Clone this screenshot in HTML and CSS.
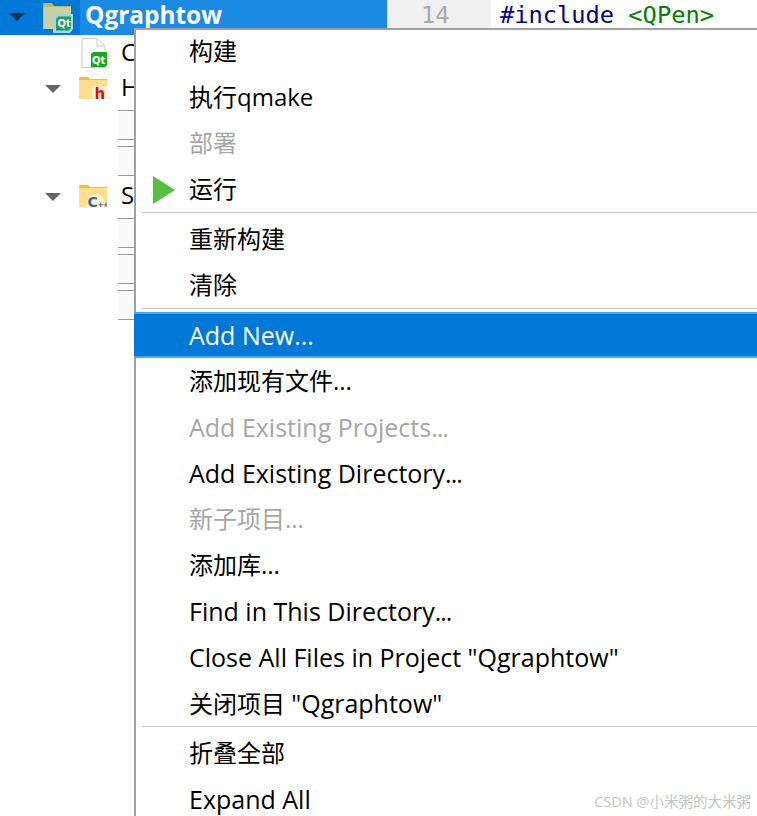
FILE: index.html
```html
<!DOCTYPE html>
<html lang="zh">
<head>
<meta charset="utf-8">
<title>Qt Creator context menu</title>
<link rel="stylesheet" href="styles.css">
</head>
<body>
<div class="app">
  <div class="topbar">
    <div class="project">
      <svg class="arrow arrow-dark" viewBox="0 0 16 9"><path d="M0 0H16L8 8Z"/></svg>
      <svg class="proj-icon" viewBox="0 0 30 30">
        <path d="M0 1Q0 0 1 0H9L11 3H28V26H1Q0 26 0 25Z" fill="#c2b46e"/>
        <path d="M0 4H28V26H1Q0 26 0 25Z" fill="#c9cfa6"/>
        <path d="M10 15L13 11H30V26L27 30H10Z" fill="#a7d3e6"/>
        <path d="M13 16L15 13.500H28V25L26 27.500H13Z" fill="#1aa05b"/>
        <text x="14.500" y="24" class="icon-text qt-text">Qt</text>
      </svg>
      <span class="project-name">Qgraphtow</span>
    </div>
    <div class="gutter">14</div>
    <div class="code"><span class="kw">#include</span> <span class="str">&lt;QPen&gt;</span></div>
  </div>
  <div class="tree">
    <div class="row row-file">
      <svg class="file-icon" viewBox="0 0 26 30">
        <path d="M1 .5H16L24 8V29.5H1Z" fill="#fff" stroke="#c8c8c8"/>
        <path d="M16 .5V8H24" fill="none" stroke="#c8c8c8"/>
        <path d="M10 16L12 14H26V27L24 29H10Z" fill="#14a821"/>
        <text x="11" y="25.500" class="icon-text qt-text">Qt</text>
      </svg>
      <span class="row-label">C</span>
    </div>
    <div class="row row-h">
      <svg class="arrow arrow-tree" viewBox="0 0 16 9"><path d="M0 0H16L8 8Z"/></svg>
      <svg class="folder" viewBox="0 0 28 23">
        <path d="M0 1Q0 0 1 0H9L11 2H28V22H0Z" fill="#fbbd2c"/>
        <path d="M0 3H28V22H0Z" fill="#ffdf8e"/>
        <path d="M13 22L13 12Q13 9 17 9H28V22Z" fill="#fff3d0"/>
        <text x="15.500" y="22" class="icon-text h-text">h</text>
      </svg>
      <span class="row-label">H</span>
    </div>
    <div class="subrows subrows-h"><i></i><i></i></div>
    <div class="row row-s">
      <svg class="arrow arrow-tree" viewBox="0 0 16 9"><path d="M0 0H16L8 8Z"/></svg>
      <svg class="folder" viewBox="0 0 28 23">
        <path d="M0 1Q0 0 1 0H9L11 2H28V22H0Z" fill="#fbbd2c"/>
        <path d="M0 3H28V22H0Z" fill="#ffdf8e"/>
        <circle cx="17" cy="18" r="9" fill="#fff3d0"/>
        <text x="8.500" y="22" class="icon-text cpp-text">C<tspan class="cpp-plus">++</tspan></text>
      </svg>
      <span class="row-label">S</span>
    </div>
    <div class="subrows"><i></i><i></i><i></i></div>
  </div>

  <div class="menu">
    <div class="item">构建</div>
    <div class="item">执行qmake</div>
    <div class="item off">部署</div>
    <div class="item"><svg class="play" viewBox="0 0 22 28"><path d="M0 0L22 14L0 28Z"/></svg>运行</div>
    <div class="sep"></div>
    <div class="item">重新构建</div>
    <div class="item">清除</div>
    <div class="sep"></div>
    <div class="item active"><span class="lat">Add New...</span></div>
    <div class="item">添加现有文件...</div>
    <div class="item off"><span class="lat">Add Existing Projects<span class="dots">...</span></span></div>
    <div class="item"><span class="lat">Add Existing Directory<span class="dots">...</span></span></div>
    <div class="item off">新子项目...</div>
    <div class="item">添加库...</div>
    <div class="item"><span class="lat">Find in This Directory<span class="dots">...</span></span></div>
    <div class="item"><span class="lat">Close All Files in Project "Qgraphtow"</span></div>
    <div class="item">关闭项目 <span class="lat">"Qgraphtow"</span></div>
    <div class="sep"></div>
    <div class="item">折叠全部</div>
    <div class="item"><span class="lat">Expand All</span></div>
  </div>
  <div class="watermark">CSDN @小米粥的大米粥</div>
</div>
</body>
</html>
```
FILE: styles.css
```css
* { box-sizing: border-box; }
html, body { margin: 0; height: 100%; background: #fff; overflow: hidden; }
.app {
  position: relative;
  width: 757px;
  height: 816px;
  overflow: hidden;
  font-family: "Open Sans", "Noto Sans CJK SC", sans-serif;
  font-size: 24px;
  color: #000;
}
.topbar { display: flex; height: 35px; }
.project {
  width: 387px;
  background: #0078d7;
  display: flex;
  align-items: center;
  padding-left: 9px;
  color: #fff;
}
.arrow { width: 16px; height: 9px; fill: #666; flex: none; }
.arrow-dark { fill: #0b3554; }
.arrow-tree { margin-top: 2px; }
.proj-icon { width: 30px; height: 30px; margin-left: 18px; flex: none; }
.project-name {
  margin-left: 7px;
  padding-left: 5px;
  font-size: 24.4px;
  font-weight: 700;
  background: #1a8ae3;
  flex: 1;
  height: 35px;
  line-height: 30px;
}
.gutter {
  width: 104px;
  background: #f0f0f0;
  color: #aaa;
  font-family: "DejaVu Sans Mono", monospace;
  font-size: 23.7px;
  line-height: 30px;
  padding-left: 34px;
  height: 28px;
}
.code {
  font-family: "DejaVu Sans Mono", monospace;
  font-size: 23.7px;
  line-height: 30px;
  padding-left: 9px;
  height: 28px;
  white-space: nowrap;
}
.kw { color: #000080; }
.str { color: #008000; }
.tree { display: flex; flex-direction: column; }
.row { display: flex; align-items: center; }
.row-file { padding-left: 81px; height: 36px; }
.row-h { padding-left: 45px; height: 34px; margin-bottom: 5px; }
.row-s { padding-left: 45px; height: 40px; margin-bottom: 2px; }
.file-icon { width: 26px; height: 30px; flex: none; }
.folder { width: 28px; height: 23px; margin-left: 18px; flex: none; }
.row-label { margin-left: 14px; line-height: 30px; margin-top: -2px; }
.icon-text { font-family: "DejaVu Sans", sans-serif; font-weight: 700; }
.qt-text { font-size: 10px; fill: #fff; }
.h-text { font-size: 15px; fill: #d80f0f; }
.cpp-text { font-size: 14px; fill: #2f6a94; }
.cpp-plus { font-size: 7px; letter-spacing: -1px; }
.subrows { display: flex; flex-direction: column; gap: 6px; }
.subrows i {
  display: block;
  margin-left: 118px;
  height: 30px;
  background: #fafafa;
  border-top: 1px solid #999;
  border-bottom: 1px solid #999;
}
.menu {
  position: absolute;
  left: 134px;
  top: 28px;
  width: 640px;
  background: #fff;
  border-top: 2px solid #a0a0a0;
  border-left: 2px solid #a0a0a0;
  white-space: nowrap;
}
.item {
  position: relative;
  height: 46px;
  line-height: 42px;
  padding-left: 53px;
}
.lat { font-size: 25px; }
.dots { letter-spacing: -1px; }
.off { color: #a6a6a6; }
.active {
  background: #0078d7;
  color: #fff;
  margin: -2px 0 2px -2px;
  padding-left: 55px;
  border: solid #3fa9f5;
  border-width: 2px 0;
}
.play {
  position: absolute;
  left: 17px;
  top: 8px;
  width: 22px;
  height: 28px;
  fill: #55bf3f;
}
.sep {
  height: 1px;
  margin: -2px 0 5px 6px;
  background: #c8c8c8;
  position: relative;
}
.watermark {
  position: absolute;
  right: 6px;
  bottom: 5px;
  font-size: 14.5px;
  color: #c4c4c4;
}
```
